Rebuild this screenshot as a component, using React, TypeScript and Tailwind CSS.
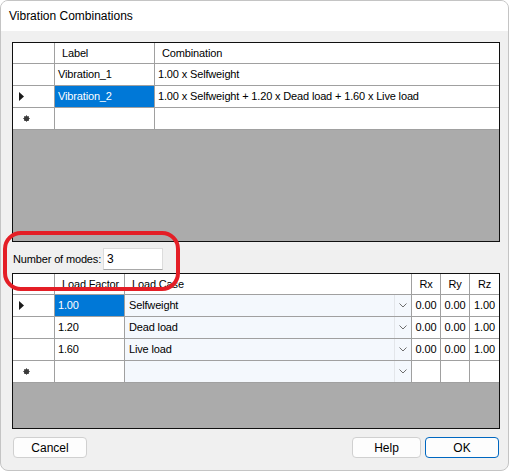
import React from 'react';

const line = 'border-[#a0a0a0]';

function Arrow() {
  return (
    <svg width="5" height="9" viewBox="0 0 5 9" className="ml-[6px]">
      <polygon points="0,0 5,4.5 0,9" fill="#1a1a1a" />
    </svg>
  );
}

function NewRow() {
  return (
    <svg width="7" height="7" viewBox="0 0 7 7" className="ml-[10px]">
      <circle cx="3.5" cy="3.5" r="2.6" fill="#3a3a3a" />
      <path d="M3.5 0.2V6.8M0.2 3.5H6.8M1.2 1.2L5.8 5.8M5.8 1.2L1.2 5.8" stroke="#3a3a3a" strokeWidth="0.8" />
    </svg>
  );
}

function Chevron() {
  return (
    <svg width="8" height="5" viewBox="0 0 8 5">
      <path d="M0.5 0.5L4 4L7.5 0.5" fill="none" stroke="#6e6e6e" strokeWidth="1" />
    </svg>
  );
}

function RowHead({ kind, h = 'h-[22px]' }: { kind?: 'arrow' | 'new'; h?: string }) {
  return (
    <div className={`w-[42px] ${h} shrink-0 border-r border-b ${line} flex items-center`}>
      {kind === 'arrow' && <Arrow />}
      {kind === 'new' && <NewRow />}
    </div>
  );
}

const combos = [
  { label: 'Vibration_1', combo: '1.00 x Selfweight' },
  { label: 'Vibration_2', combo: '1.00 x Selfweight + 1.20 x Dead load + 1.60 x Live load', current: true },
];

const loads = [
  { f: '1.00', c: 'Selfweight', current: true },
  { f: '1.20', c: 'Dead load' },
  { f: '1.60', c: 'Live load' },
];

function ComboCell({ text }: { text?: string }) {
  return (
    <div className={`w-[287px] h-[22px] border-r border-b ${line} flex bg-[#f4f8fd]`}>
      <div className="flex-1 flex items-center pl-[4px]">{text}</div>
      <div className="w-[17px] border-l border-[#e3e6ea] flex items-center justify-center">
        <Chevron />
      </div>
    </div>
  );
}

function Val({ v, last }: { v?: string; last?: boolean }) {
  return (
    <div className={`w-[29px] h-[22px] ${last ? '' : 'border-r'} border-b ${line} flex items-center justify-center`}>
      {v}
    </div>
  );
}

export default function App() {
  return (
    <div className="w-[511px] h-[471px] bg-white relative font-['Liberation_Sans',Arial,sans-serif] text-black">
      <div className="w-[509px] h-[471px] border border-[#c4c4c4] rounded-[8px] overflow-hidden flex flex-col bg-[#f0f0f0]">
        <div className="h-[30px] bg-white flex items-center pl-[8px] text-[12px]">Vibration Combinations</div>

        <div className="flex flex-col pl-[11px] pr-[8px] pt-[11px] text-[11px] tracking-[-0.15px]">
          {/* combinations grid */}
          <div className="w-[488px] h-[200px] border border-[#101010] bg-[#ababab] flex flex-col">
            <div className="flex bg-white">
              <RowHead h="h-[21px]" />
              <div className={`w-[100px] h-[21px] border-r border-b ${line} flex items-center pl-[7px]`}>Label</div>
              <div className={`flex-1 h-[21px] border-b ${line} flex items-center pl-[7px]`}>Combination</div>
            </div>
            {combos.map((r) => (
              <div key={r.label} className="flex bg-white">
                <RowHead kind={r.current ? 'arrow' : undefined} />
                <div
                  className={`w-[100px] h-[22px] border-r border-b ${line} flex items-center pl-[3px] ${
                    r.current ? 'bg-[#0078d7] text-white' : ''
                  }`}
                >
                  {r.label}
                </div>
                <div className={`flex-1 h-[22px] border-b ${line} flex items-center pl-[3px]`}>{r.combo}</div>
              </div>
            ))}
            <div className="flex bg-white">
              <RowHead kind="new" />
              <div className={`w-[100px] h-[22px] border-r border-b ${line}`} />
              <div className={`flex-1 h-[22px] border-b ${line}`} />
            </div>
          </div>

          {/* modes */}
          <div className="flex items-center mt-[6px] h-[22px]">
            <div className="w-[91px] pl-[1px]">Number of modes:</div>
            <div className="w-[60px] h-[22px] bg-white border border-[#dcdcdc] border-b-[#a8a8a8] flex items-center pl-[3px] text-[12px]">
              3
            </div>
          </div>

          {/* loads grid */}
          <div className="w-[488px] h-[156px] mt-[3px] border border-[#101010] bg-[#ababab] flex flex-col">
            <div className="flex bg-white">
              <RowHead h="h-[21px]" />
              <div className={`w-[70px] h-[21px] border-r border-b ${line} flex items-center pl-[7px]`}>Load Factor</div>
              <div className={`w-[287px] h-[21px] border-r border-b ${line} flex items-center pl-[7px]`}>Load Case</div>
              <div className={`w-[29px] h-[21px] border-r border-b ${line} flex items-center justify-center`}>Rx</div>
              <div className={`w-[29px] h-[21px] border-r border-b ${line} flex items-center justify-center`}>Ry</div>
              <div className={`w-[29px] h-[21px] border-b ${line} flex items-center justify-center`}>Rz</div>
            </div>
            {loads.map((r) => (
              <div key={r.f} className="flex bg-white">
                <RowHead kind={r.current ? 'arrow' : undefined} />
                <div
                  className={`w-[70px] h-[22px] border-r border-b ${line} flex items-center pl-[3px] ${
                    r.current ? 'bg-[#0078d7] text-white' : ''
                  }`}
                >
                  {r.f}
                </div>
                <ComboCell text={r.c} />
                <Val v="0.00" />
                <Val v="0.00" />
                <Val v="1.00" last />
              </div>
            ))}
            <div className="flex bg-white">
              <RowHead kind="new" />
              <div className={`w-[70px] h-[22px] border-r border-b ${line}`} />
              <ComboCell />
              <Val />
              <Val />
              <Val last />
            </div>
          </div>

          {/* buttons */}
          <div className="flex items-center mt-[8px] text-[12px] tracking-normal">
            <button className="ml-[1px] w-[74px] h-[21px] rounded-[4px] border border-[#d0d0d0] bg-[#fdfdfd]">
              Cancel
            </button>
            <div className="flex-1" />
            <button className="w-[69px] h-[21px] rounded-[4px] border border-[#d0d0d0] bg-[#fdfdfd]">Help</button>
            <button className="ml-[4px] mr-[1px] w-[74px] h-[21px] rounded-[4px] border-[1.5px] border-[#0067c0] bg-[#fdfdfd]">
              OK
            </button>
          </div>
        </div>
      </div>

      {/* red annotation */}
      <div className="absolute left-[3px] top-[231px] w-[177px] h-[60px] border-[4px] border-[#e41e26] rounded-[18px]" />
    </div>
  );
}
